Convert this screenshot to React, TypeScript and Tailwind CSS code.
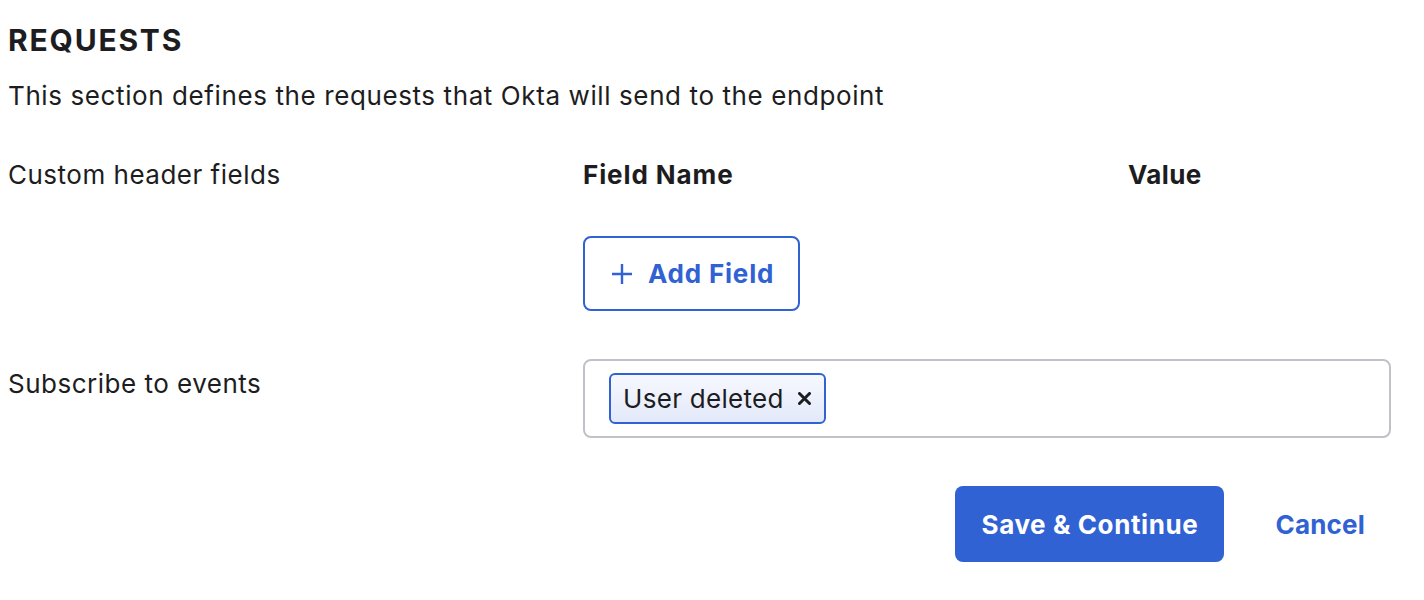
import React from "react";

export default function App() {
  return (
    <div
      className="w-[1424px] h-[600px] bg-white text-[#1d1d21] pl-2 pr-[33px] pt-[22px]"
      style={{ fontFamily: "Inter, 'Noto Sans', sans-serif" }}
    >
      <h2 className="text-[30px] leading-[36px] font-bold tracking-[1.8px]">REQUESTS</h2>
      <p className="mt-[24px] text-[26px] leading-[28px] tracking-[0.6px]">
        This section defines the requests that Okta will send to the endpoint
      </p>

      <div className="mt-[50px] flex">
        <div className="w-[575px] text-[26px] leading-[30px] tracking-[0.5px]">Custom header fields</div>
        <div className="flex-1">
          <div className="flex text-[26px] leading-[30px] font-bold">
            <div className="w-[545px] tracking-[0.9px]">Field Name</div>
            <div className="tracking-[0.4px]">Value</div>
          </div>
          <button className="mt-[46px] h-[75px] w-[217px] rounded-[8px] border-2 border-[#3062d4] flex items-center pl-[26px] gap-[15px] text-[#3062d4] text-[26px] font-bold tracking-[0.8px]">
            <svg width="22" height="22" viewBox="0 0 22 22" fill="none" stroke="#3062d4" strokeWidth="2.4">
              <path d="M11 1v20M1 11h20" />
            </svg>
            Add Field
          </button>
        </div>
      </div>

      <div className="mt-[48px] flex">
        <div className="w-[575px] text-[26px] leading-[30px] pt-[10px] tracking-[0.5px]">Subscribe to events</div>
        <div className="flex-1 h-[79px] rounded-[8px] border-2 border-[#c1c1c8] flex items-center pl-[24px]">
          <div className="h-[51px] flex items-center gap-[14px] rounded-[6px] border-2 border-[#3062d4] bg-gradient-to-b from-[#f7f8fe] to-[#e3e9fa] pl-[12px] pr-[13px] text-[26px] tracking-[0.3px]">
            <span>User deleted</span>
            <svg width="13" height="13" viewBox="0 0 13 13" stroke="#1d1d21" strokeWidth="3" strokeLinecap="round">
              <path d="M1.5 1.5l10 10M11.5 1.5l-10 10" />
            </svg>
          </div>
        </div>
      </div>

      <div className="mt-[48px] flex justify-end items-center">
        <button className="h-[76px] w-[269px] rounded-[8px] bg-[#3062d4] text-white text-[26px] font-bold tracking-[0.6px]">
          Save &amp; Continue
        </button>
        <button className="ml-[51px] mr-[26px] text-[#3062d4] text-[26px] font-bold tracking-[0.2px]">Cancel</button>
      </div>
    </div>
  );
}
